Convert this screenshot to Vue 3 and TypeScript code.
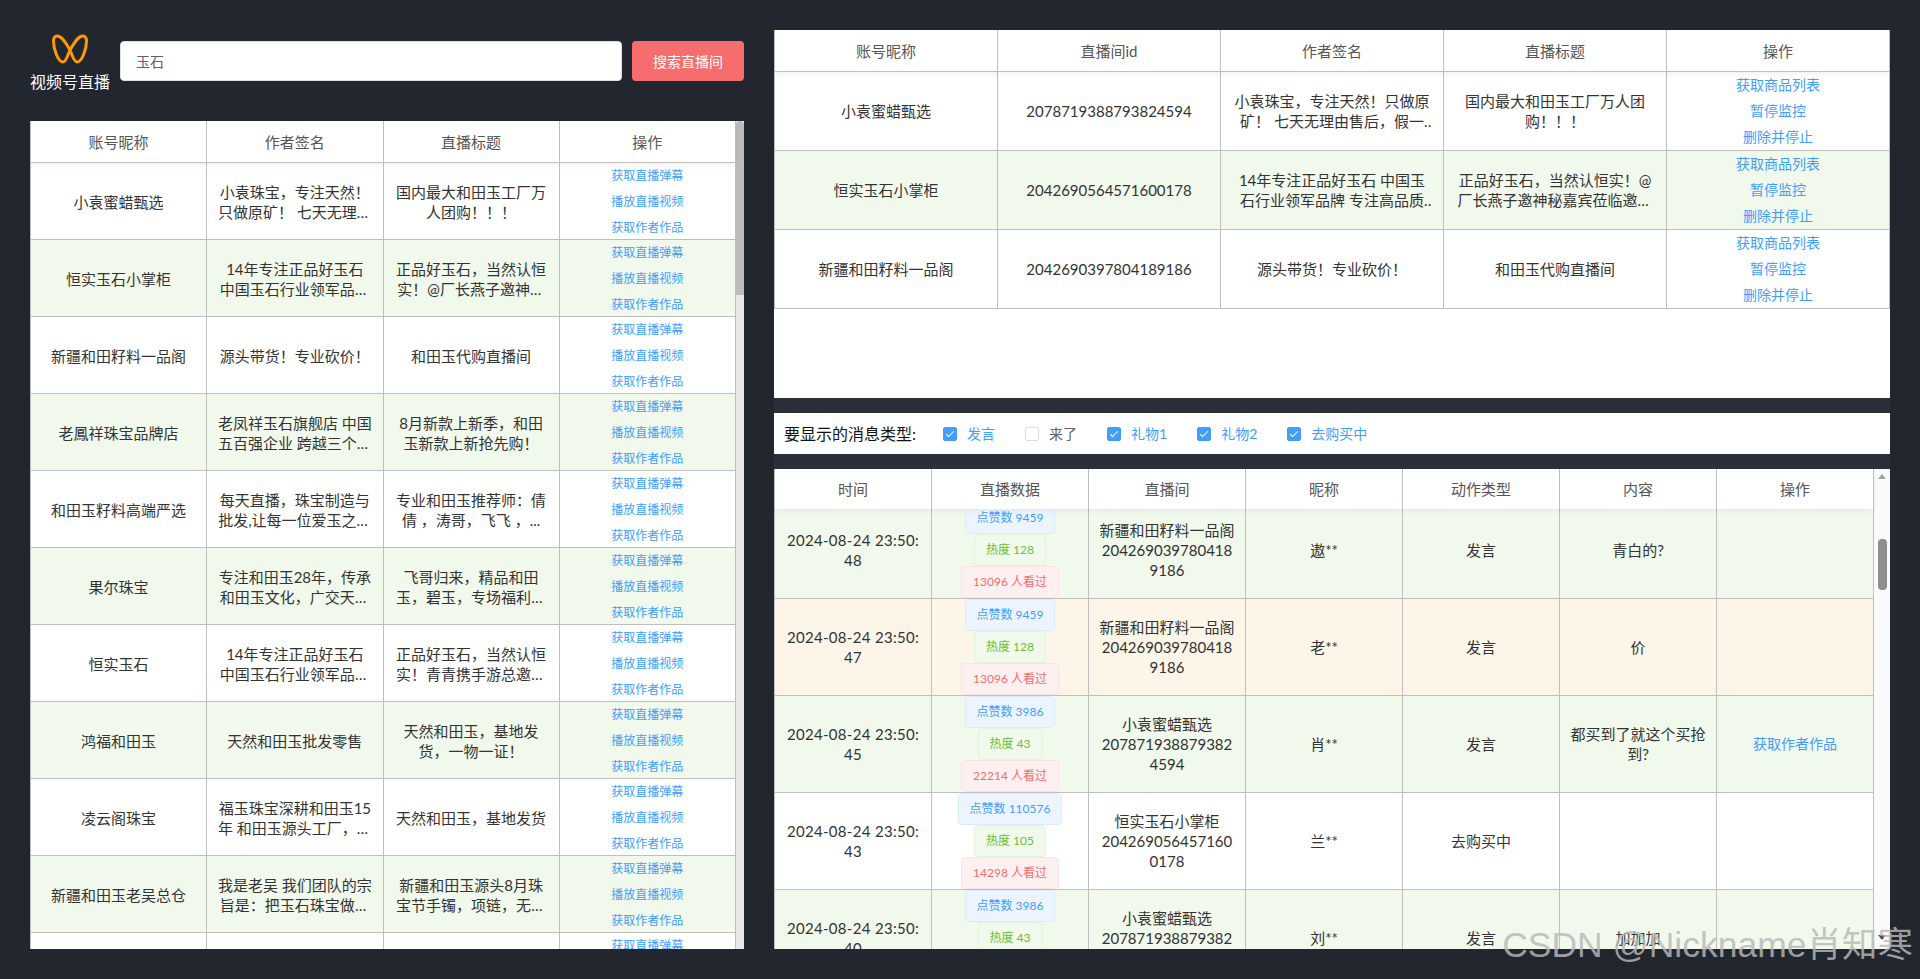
<template>
  <div class="page">
    <section class="left">
      <header class="search">
        <div class="logo">
          <svg width="36" height="30" viewBox="0 0 36 30" fill="none">
            <path
              d="M5 2C10 2 14 9 18 16C20 20 21.5 28 25 28C30 28 34.5 15 34.5 7C34.5 4 33 2 31 2C26 2 22 9 18 16C16 20 14.5 28 11 28C6 28 1.5 15 1.5 7C1.5 4 3 2 5 2Z"
              stroke="#ff9900"
              stroke-width="3"
            />
          </svg>
          <span>视频号直播</span>
        </div>
        <input v-model="keyword" class="keyword" type="text" />
        <button class="search-btn">搜索直播间</button>
      </header>

      <div class="table-wrap live-list">
        <div class="table-main">
          <div class="row head cols-4">
            <div v-for="h in liveHeads" :key="h" class="cell">{{ h }}</div>
          </div>
          <div class="body">
            <div v-for="(r, i) in lives" :key="i" class="row live-row cols-4" :class="{ green: i % 2 === 1 }">
              <div class="cell">{{ r.name }}</div>
              <div class="cell"><span class="clamp">{{ r.sign }}</span></div>
              <div class="cell"><span class="clamp">{{ r.title }}</span></div>
              <div class="cell links small">
                <a v-for="l in liveLinks" :key="l">{{ l }}</a>
              </div>
            </div>
          </div>
        </div>
        <div class="bar-light"><div class="thumb-light"></div></div>
      </div>
    </section>

    <section class="right">
      <div class="table-wrap monitor">
        <div class="table-main">
          <div class="row head cols-5">
            <div v-for="h in monitorHeads" :key="h" class="cell">{{ h }}</div>
          </div>
          <div class="body">
            <div v-for="(r, i) in monitors" :key="r.id" class="row monitor-row cols-5" :class="{ green: i % 2 === 1 }">
              <div class="cell">{{ r.name }}</div>
              <div class="cell">{{ r.id }}</div>
              <div class="cell wide-pad"><span class="clamp">{{ r.sign }}</span></div>
              <div class="cell wide-pad"><span class="clamp">{{ r.title }}</span></div>
              <div class="cell links">
                <a v-for="l in monitorLinks" :key="l">{{ l }}</a>
              </div>
            </div>
          </div>
        </div>
      </div>

      <div class="lower">
        <div class="filter">
          <span class="filter-title">要显示的消息类型:</span>
          <label v-for="t in types" :key="t.label" class="check" :class="{ on: t.on }">
            <input v-model="t.on" type="checkbox" />
            <i class="box"></i>
            <span>{{ t.label }}</span>
          </label>
        </div>

        <div class="table-wrap messages">
          <div class="table-main">
            <div class="row head no-line cols-7">
              <div v-for="h in messageHeads" :key="h" class="cell">{{ h }}</div>
            </div>
            <div class="body">
              <div class="scrolled">
                <div v-for="(m, i) in messages" :key="i" class="row message-row cols-7" :class="m.color">
                  <div class="cell"><span class="breakall time">{{ m.time }}</span></div>
                  <div class="cell tags">
                    <span class="tag blue">点赞数 {{ m.likes }}</span>
                    <span class="tag lime">热度 {{ m.heat }}</span>
                    <span class="tag red">{{ m.views }} 人看过</span>
                  </div>
                  <div class="cell"><span class="breakall">{{ m.room }}<br />{{ m.roomId }}</span></div>
                  <div class="cell">{{ m.nick }}</div>
                  <div class="cell">{{ m.action }}</div>
                  <div class="cell">{{ m.content }}</div>
                  <div class="cell links"><a v-if="m.link">获取作者作品</a></div>
                </div>
              </div>
            </div>
          </div>
          <div class="bar-dark">
            <i class="arrow up"></i>
            <div class="thumb-dark"></div>
            <i class="arrow down"></i>
          </div>
        </div>
      </div>
    </section>

    <div class="watermark">CSDN @Nickname肖知寒</div>
  </div>
</template>

<script setup lang="ts">
import { reactive, ref } from 'vue'

const keyword = ref('玉石')

const liveHeads = ['账号昵称', '作者签名', '直播标题', '操作']
const liveLinks = ['获取直播弹幕', '播放直播视频', '获取作者作品']
const monitorHeads = ['账号昵称', '直播间id', '作者签名', '直播标题', '操作']
const monitorLinks = ['获取商品列表', '暂停监控', '删除并停止']
const messageHeads = ['时间', '直播数据', '直播间', '昵称', '动作类型', '内容', '操作']

const signA = '小袁珠宝，专注天然！只做原矿！ 七天无理由售后，假一赔十，支持复检'
const signB = '14年专注正品好玉石 中国玉石行业领军品牌 专注高品质玉石二十年不变'

const lives = [
  { name: '小袁蜜蜡甄选', sign: signA, title: '国内最大和田玉工厂万人团购！！！' },
  { name: '恒实玉石小掌柜', sign: signB, title: '正品好玉石，当然认恒实！@厂长燕子邀神秘嘉宾莅临邀约粉丝' },
  { name: '新疆和田籽料一品阁', sign: '源头带货！专业砍价！', title: '和田玉代购直播间' },
  { name: '老鳳祥珠宝品牌店', sign: '老凤祥玉石旗舰店 中国五百强企业 跨越三个世纪的传承', title: '8月新款上新季，和田玉新款上新抢先购！' },
  { name: '和田玉籽料高端严选', sign: '每天直播，珠宝制造与批发,让每一位爱玉之人都能买到好货', title: '专业和田玉推荐师：倩倩 ，涛哥，飞飞 ，...' },
  { name: '果尔珠宝', sign: '专注和田玉28年，传承和田玉文化，广交天下玉友', title: '飞哥归来，精品和田玉，碧玉，专场福利价格给到大家' },
  { name: '恒实玉石', sign: signB, title: '正品好玉石，当然认恒实！青青携手游总邀约粉丝一起来' },
  { name: '鸿福和田玉', sign: '天然和田玉批发零售', title: '天然和田玉，基地发货，一物一证！' },
  { name: '凌云阁珠宝', sign: '福玉珠宝深耕和田玉15年 和田玉源头工厂，厂家直销一手货源', title: '天然和田玉，基地发货' },
  { name: '新疆和田玉老吴总仓', sign: '我是老吴 我们团队的宗旨是：把玉石珠宝做到物美价廉', title: '新疆和田玉源头8月珠宝节手镯，项链，无事牌专场' },
  { name: '和田玉总仓', sign: '和田玉批发', title: '和田玉源头' },
]

const monitors = [
  { name: '小袁蜜蜡甄选', id: '2078719388793824594', sign: signA, title: '国内最大和田玉工厂万人团购！！！' },
  { name: '恒实玉石小掌柜', id: '2042690564571600178', sign: signB, title: '正品好玉石，当然认恒实！@厂长燕子邀神秘嘉宾莅临邀约粉丝一起来' },
  { name: '新疆和田籽料一品阁', id: '2042690397804189186', sign: '源头带货！专业砍价！', title: '和田玉代购直播间' },
]

const types = reactive([
  { label: '发言', on: true },
  { label: '来了', on: false },
  { label: '礼物1', on: true },
  { label: '礼物2', on: true },
  { label: '去购买中', on: true },
])

const messages = [
  { time: '2024-08-24 23:50:48', likes: 9459, heat: 128, views: 13096, room: '新疆和田籽料一品阁', roomId: '2042690397804189186', nick: '遨**', action: '发言', content: '青白的?', color: 'green', link: false },
  { time: '2024-08-24 23:50:47', likes: 9459, heat: 128, views: 13096, room: '新疆和田籽料一品阁', roomId: '2042690397804189186', nick: '老**', action: '发言', content: '价', color: 'orange', link: false },
  { time: '2024-08-24 23:50:45', likes: 3986, heat: 43, views: 22214, room: '小袁蜜蜡甄选', roomId: '2078719388793824594', nick: '肖**', action: '发言', content: '都买到了就这个买抢到?', color: 'green', link: true },
  { time: '2024-08-24 23:50:43', likes: 110576, heat: 105, views: 14298, room: '恒实玉石小掌柜', roomId: '2042690564571600178', nick: '兰**', action: '去购买中', content: '', color: '', link: false },
  { time: '2024-08-24 23:50:40', likes: 3986, heat: 43, views: 22214, room: '小袁蜜蜡甄选', roomId: '2078719388793824594', nick: '刘**', action: '发言', content: '加加加', color: 'green', link: false },
]
</script>

<style>
html,
body {
  background: #22262e;
}
</style>

<style scoped>
.page {
  position: relative;
  display: flex;
  gap: 30px;
  box-sizing: border-box;
  height: 979px;
  padding: 30px;
  overflow: hidden;
  background: #22262e;
  font-family: Lato, "Noto Sans CJK SC", sans-serif;
  font-size: 15px;
  line-height: 20px;
  color: #333;
}
.left {
  display: flex;
  flex-direction: column;
  width: 714px;
}
.right {
  display: flex;
  flex-direction: column;
  flex: 1;
  min-width: 0;
}
.search {
  display: flex;
  align-items: center;
  height: 62px;
  margin-bottom: 29px;
}
.logo {
  display: flex;
  flex-direction: column;
  align-items: center;
  width: 80px;
  margin-top: 5px;
  margin-right: 10px;
  color: #fff;
  font-size: 16px;
  line-height: 22px;
}
.logo svg {
  margin-bottom: 7px;
}
.keyword {
  flex: 1;
  box-sizing: border-box;
  height: 40px;
  padding: 0 15px;
  border: 1px solid #dcdfe6;
  border-radius: 4px;
  background: #fff;
  outline: none;
  font: 14px Lato, "Noto Sans CJK SC", sans-serif;
  color: #606266;
}
.search-btn {
  width: 112px;
  height: 40px;
  margin-left: 10px;
  border: 0;
  border-radius: 4px;
  background: #f76d6d;
  font: 14px Lato, "Noto Sans CJK SC", sans-serif;
  color: #fff;
}
.table-wrap {
  display: flex;
  background: #fff;
  overflow: hidden;
}
.table-main {
  display: flex;
  flex-direction: column;
  flex: 1;
  min-width: 0;
}
.body {
  flex: 1;
  min-height: 0;
  overflow: hidden;
}
.row {
  display: grid;
  box-sizing: border-box;
  border-bottom: 1px solid #bfbfbf;
  border-left: 1px solid #bfbfbf;
}
.cols-4 {
  grid-template-columns: repeat(4, 1fr);
}
.cols-5 {
  grid-template-columns: repeat(5, 1fr);
}
.cols-7 {
  grid-template-columns: repeat(7, 1fr);
}
.head {
  position: relative;
  z-index: 1;
  height: 42px;
  background: #fff;
  color: #555;
  box-shadow: 0 2px 6px rgba(0, 0, 0, 0.06);
}
.head.no-line {
  height: 40px;
  border-bottom: 0;
}
.cell {
  display: flex;
  align-items: center;
  justify-content: center;
  box-sizing: border-box;
  min-width: 0;
  padding: 0 10px;
  border-right: 1px solid #bfbfbf;
  text-align: center;
}
.wide-pad {
  padding: 0 12px;
}
.green {
  background: #f1f8ec;
}
.orange {
  background: #fdf5e8;
}
.clamp {
  display: -webkit-box;
  overflow: hidden;
  -webkit-box-orient: vertical;
  -webkit-line-clamp: 2;
}
.breakall {
  min-width: 0;
  word-break: break-all;
}
.time {
  letter-spacing: 0.3px;
}
.links {
  flex-direction: column;
  color: #409eff;
  font-size: 14px;
  line-height: 26px;
}
.links.small {
  font-size: 12px;
}
.live-list {
  height: 828px;
}
.live-row {
  height: 77px;
}
.monitor {
  height: 368px;
}
.monitor-row {
  height: 79px;
}
.message-row {
  height: 97px;
}
.bar-light {
  flex: none;
  width: 8px;
  background: #e8e8e8;
}
.thumb-light {
  height: 174px;
  border-radius: 4px 4px 0 0;
  background: #bcbcbc;
}
.lower {
  display: flex;
  flex-direction: column;
  flex: 1;
  gap: 15px;
  min-height: 0;
  padding-top: 15px;
  background: #2b2f39;
}
.filter {
  display: flex;
  align-items: center;
  height: 41px;
  padding-left: 10px;
  background: #fff;
  font-size: 14px;
  color: #606266;
}
.filter-title {
  margin-right: 27px;
  font-size: 16px;
  color: #111;
}
.check {
  display: flex;
  align-items: center;
  margin-right: 30px;
}
.check input {
  display: none;
}
.box {
  position: relative;
  box-sizing: border-box;
  width: 14px;
  height: 14px;
  margin-right: 10px;
  border: 1px solid #dcdfe6;
  border-radius: 2px;
  background: #fff;
}
.check.on {
  color: #409eff;
}
.check.on .box {
  border-color: #409eff;
  background: #409eff;
}
.check.on .box::after {
  content: "";
  position: absolute;
  top: 1px;
  left: 4px;
  width: 3px;
  height: 7px;
  border: 1px solid #fff;
  border-top: 0;
  border-left: 0;
  transform: rotate(45deg);
}
.messages {
  flex: 1;
  min-height: 0;
}
.scrolled {
  margin-top: -7px;
}
.tags {
  flex-direction: column;
  padding: 0;
}
.tag {
  box-sizing: border-box;
  height: 32px;
  padding: 0 11px;
  border: 1px solid;
  border-radius: 4px;
  font-size: 12px;
  line-height: 30px;
  white-space: nowrap;
}
.tag.blue {
  border-color: #d9ecff;
  background: #ecf5ff;
  color: #409eff;
}
.tag.lime {
  border-color: #e1f3d8;
  background: #f0f9eb;
  color: #67c23a;
}
.tag.red {
  border-color: #fde2e2;
  background: #fef0f0;
  color: #f56c6c;
}
.bar-dark {
  display: flex;
  flex-direction: column;
  align-items: center;
  flex: none;
  width: 16px;
  padding: 5px 0;
  box-sizing: border-box;
  background: #fafafa;
}
.thumb-dark {
  width: 9px;
  height: 51px;
  margin-top: 60px;
  border-radius: 4px;
  background: #8f8f8f;
}
.arrow {
  width: 0;
  height: 0;
  border-right: 4px solid transparent;
  border-left: 4px solid transparent;
}
.arrow.up {
  border-bottom: 5px solid #a0a0a0;
}
.arrow.down {
  margin-top: auto;
  margin-bottom: 4px;
  border-top: 5px solid #505050;
}
.watermark {
  position: absolute;
  right: 7px;
  bottom: 14px;
  font-family: "Liberation Sans", "Noto Sans CJK SC", sans-serif;
  font-size: 35.5px;
  line-height: 40px;
  white-space: nowrap;
  color: rgba(185, 185, 185, 0.82);
}
</style>
